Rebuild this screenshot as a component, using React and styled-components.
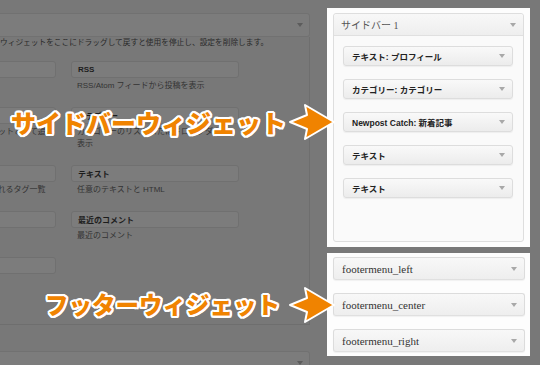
import styled, { createGlobalStyle } from "styled-components";

const GlobalStyle = createGlobalStyle`
  html, body {
    margin: 0;
    padding: 0;
    background: #787878;
  }
  body {
    font-family: "Liberation Sans", "Noto Sans CJK JP", sans-serif;
    overflow: hidden;
  }
`;

const Page = styled.div`
  position: relative;
  display: flex;
  width: 540px;
  height: 365px;
  overflow: hidden;
  background: #787878;
`;

/* ---------- dimmed left area (available widgets) ---------- */

const LeftPane = styled.div`
  flex: 0 0 327px;
  overflow: hidden;
  padding-top: 13px;
  box-sizing: border-box;
`;

const DimPanel = styled.div`
  margin-left: -130px;
  width: 440px;
`;

const DimHeader = styled.div`
  display: flex;
  align-items: center;
  justify-content: flex-end;
  box-sizing: border-box;
  height: 24px;
  padding-right: 6px;
  background: #7c7c7c;
  border: 1px solid #717171;
  border-radius: 0 3px 3px 0;
  margin-top: ${(p) => p.$gap || 0}px;
`;

const DimBody = styled.div`
  box-sizing: border-box;
  height: 288px;
  border: 1px solid #6e6e6e;
  border-top: none;
`;

const Intro = styled.p`
  margin: 0;
  padding: 1px 0 0 129px;
  font-size: 7.7px;
  line-height: 10px;
  color: #2a2a2a;
  white-space: nowrap;
`;

const WidgetGrid = styled.div`
  display: grid;
  grid-template-columns: 168px 168px;
  column-gap: 15px;
  row-gap: 15px;
  padding-left: 17px;
  margin-top: 13px;
`;

const DimCell = styled.div``;

const DimBox = styled.div`
  box-sizing: border-box;
  height: 17px;
  padding-left: 6px;
  display: flex;
  align-items: center;
  background: #7c7c7c;
  border: 1px solid #707070;
  border-radius: 3px;
  font-size: 8px;
  font-weight: bold;
  color: #1c1c1c;
`;

const DimDesc = styled.div`
  width: 156px;
  padding: 2px 0 0 6px;
  font-size: 8px;
  line-height: 12px;
  color: #333;
`;

const DimCaret = styled.span`
  width: 0;
  height: 0;
  border-left: 3px solid transparent;
  border-right: 3px solid transparent;
  border-top: 4px solid #5c5c5c;
`;

/* ---------- right column (sidebars) ---------- */

const RightColumn = styled.div`
  flex: 0 0 203px;
  display: flex;
  flex-direction: column;
  gap: 6px;
  margin-top: 8px;
`;

const WhitePanel = styled.div`
  background: #fdfdfd;
  padding: ${(p) => p.$pad};
`;

const SidebarBox = styled.div`
  background: #fafafa;
  border: 1px solid #dedede;
  border-radius: 3px;
`;

const SidebarName = styled.div`
  box-sizing: border-box;
  display: flex;
  align-items: center;
  justify-content: space-between;
  height: ${(p) => (p.$collapsed ? 23 : 22)}px;
  padding: 0 7px 0 ${(p) => (p.$collapsed ? 8 : 7)}px;
  background: linear-gradient(#f8f8f8, #eeeeee);
  border: ${(p) => (p.$collapsed ? "1px solid #dcdcdc" : "none")};
  border-bottom: 1px solid #e0e0e0;
  border-radius: ${(p) => (p.$collapsed ? "3px" : "3px 3px 0 0")};
  font-family: "Liberation Serif", "Noto Sans CJK JP", serif;
  font-size: ${(p) => (p.$collapsed ? 11 : 10)}px;
  color: ${(p) => (p.$collapsed ? "#333" : "#555")};
  box-shadow: ${(p) => (p.$collapsed ? "0 1px 1px rgba(0,0,0,0.05)" : "none")};
`;

const WidgetList = styled.div`
  display: flex;
  flex-direction: column;
  gap: 13px;
  padding: 10px 10px 43px 9px;
`;

const Widget = styled.div`
  box-sizing: border-box;
  display: flex;
  align-items: center;
  justify-content: space-between;
  height: 20px;
  padding: 0 7px 0 8px;
  background: linear-gradient(#f9f9f9, #ececec);
  border: 1px solid #dddddd;
  border-radius: 3px;
  box-shadow: 0 1px 1px rgba(0, 0, 0, 0.05);
  font-size: 8.5px;
  font-weight: bold;
  color: #222;
`;

const FooterList = styled.div`
  display: flex;
  flex-direction: column;
  gap: 13px;
`;

const Caret = styled.span`
  width: 0;
  height: 0;
  border-left: 3px solid transparent;
  border-right: 3px solid transparent;
  border-top: 4px solid #a8a8a8;
`;

/* ---------- annotations ---------- */

const Callout = styled.div`
  position: absolute;
  top: ${(p) => p.$top}px;
  right: 204px;
  display: flex;
  align-items: center;
  gap: ${(p) => p.$gap}px;
`;

const Label = styled.span`
  font-family: "Noto Sans CJK JP", sans-serif;
  font-weight: 900;
  font-size: ${(p) => p.$size}px;
  line-height: 1;
  color: #f08300;
  white-space: nowrap;
  text-shadow:
    2px 0 0 #fff, -2px 0 0 #fff, 0 2px 0 #fff, 0 -2px 0 #fff,
    1.5px 1.5px 0 #fff, -1.5px 1.5px 0 #fff, 1.5px -1.5px 0 #fff, -1.5px -1.5px 0 #fff,
    2px 1px 0 #fff, -2px 1px 0 #fff, 2px -1px 0 #fff, -2px -1px 0 #fff,
    1px 2px 0 #fff, -1px 2px 0 #fff, 1px -2px 0 #fff, -1px -2px 0 #fff;
`;

function Arrow() {
  return (
    <svg width="48" height="38" viewBox="0 0 48 38">
      <polygon
        points="2,19 19,12 17,2 46,19 17,36 19,26"
        fill="#f08300"
        stroke="#fff"
        strokeWidth="2"
        strokeLinejoin="round"
      />
    </svg>
  );
}

const available = [
  { title: "アーカイブ", desc: "月別の投稿アーカイブ" },
  { title: "RSS", desc: "RSS/Atom フィードから投稿を表示" },
  { title: "カスタムメニュー", desc: "カスタムメニューをウィジェットとして追加" },
  { title: "カテゴリー", desc: "カテゴリーのリストまたはドロップダウン表示" },
  { title: "タグクラウド", desc: "当サイトでもっともよく使われるタグ一覧" },
  { title: "テキスト", desc: "任意のテキストと HTML" },
  { title: "検索", desc: "サイト用の検索フォーム" },
  { title: "最近のコメント", desc: "最近のコメント" },
  { title: "固定ページ", desc: "固定ページ" },
];

const sidebarWidgets = [
  "テキスト: プロフィール",
  "カテゴリー: カテゴリー",
  "Newpost Catch: 新着記事",
  "テキスト",
  "テキスト",
];

const footerSidebars = ["footermenu_left", "footermenu_center", "footermenu_right"];

export default function App() {
  return (
    <Page>
      <GlobalStyle />

      <LeftPane>
        <DimPanel>
          <DimHeader>
            <DimCaret />
          </DimHeader>
          <DimBody>
            <Intro>ウィジェットをここにドラッグして戻すと使用を停止し、設定を削除します。</Intro>
            <WidgetGrid>
              {available.map((w) => (
                <DimCell key={w.title}>
                  <DimBox>{w.title}</DimBox>
                  <DimDesc>{w.desc}</DimDesc>
                </DimCell>
              ))}
            </WidgetGrid>
          </DimBody>
          <DimHeader $gap={26}>
            <DimCaret />
          </DimHeader>
        </DimPanel>
      </LeftPane>

      <RightColumn>
        <WhitePanel $pad="5px 6px">
          <SidebarBox>
            <SidebarName>
              <span>サイドバー 1</span>
              <Caret />
            </SidebarName>
            <WidgetList>
              {sidebarWidgets.map((name, i) => (
                <Widget key={i}>
                  <span>{name}</span>
                  <Caret />
                </Widget>
              ))}
            </WidgetList>
          </SidebarBox>
        </WhitePanel>

        <WhitePanel $pad="4px 5px 4px 6px">
          <FooterList>
            {footerSidebars.map((name) => (
              <SidebarName key={name} $collapsed>
                <span>{name}</span>
                <Caret />
              </SidebarName>
            ))}
          </FooterList>
        </WhitePanel>
      </RightColumn>

      <Callout $top={103} $gap={2}>
        <Label $size={25}>サイドバーウィジェット</Label>
        <Arrow />
      </Callout>

      <Callout $top={286} $gap={8}>
        <Label $size={23.5}>フッターウィジェット</Label>
        <Arrow />
      </Callout>
    </Page>
  );
}
